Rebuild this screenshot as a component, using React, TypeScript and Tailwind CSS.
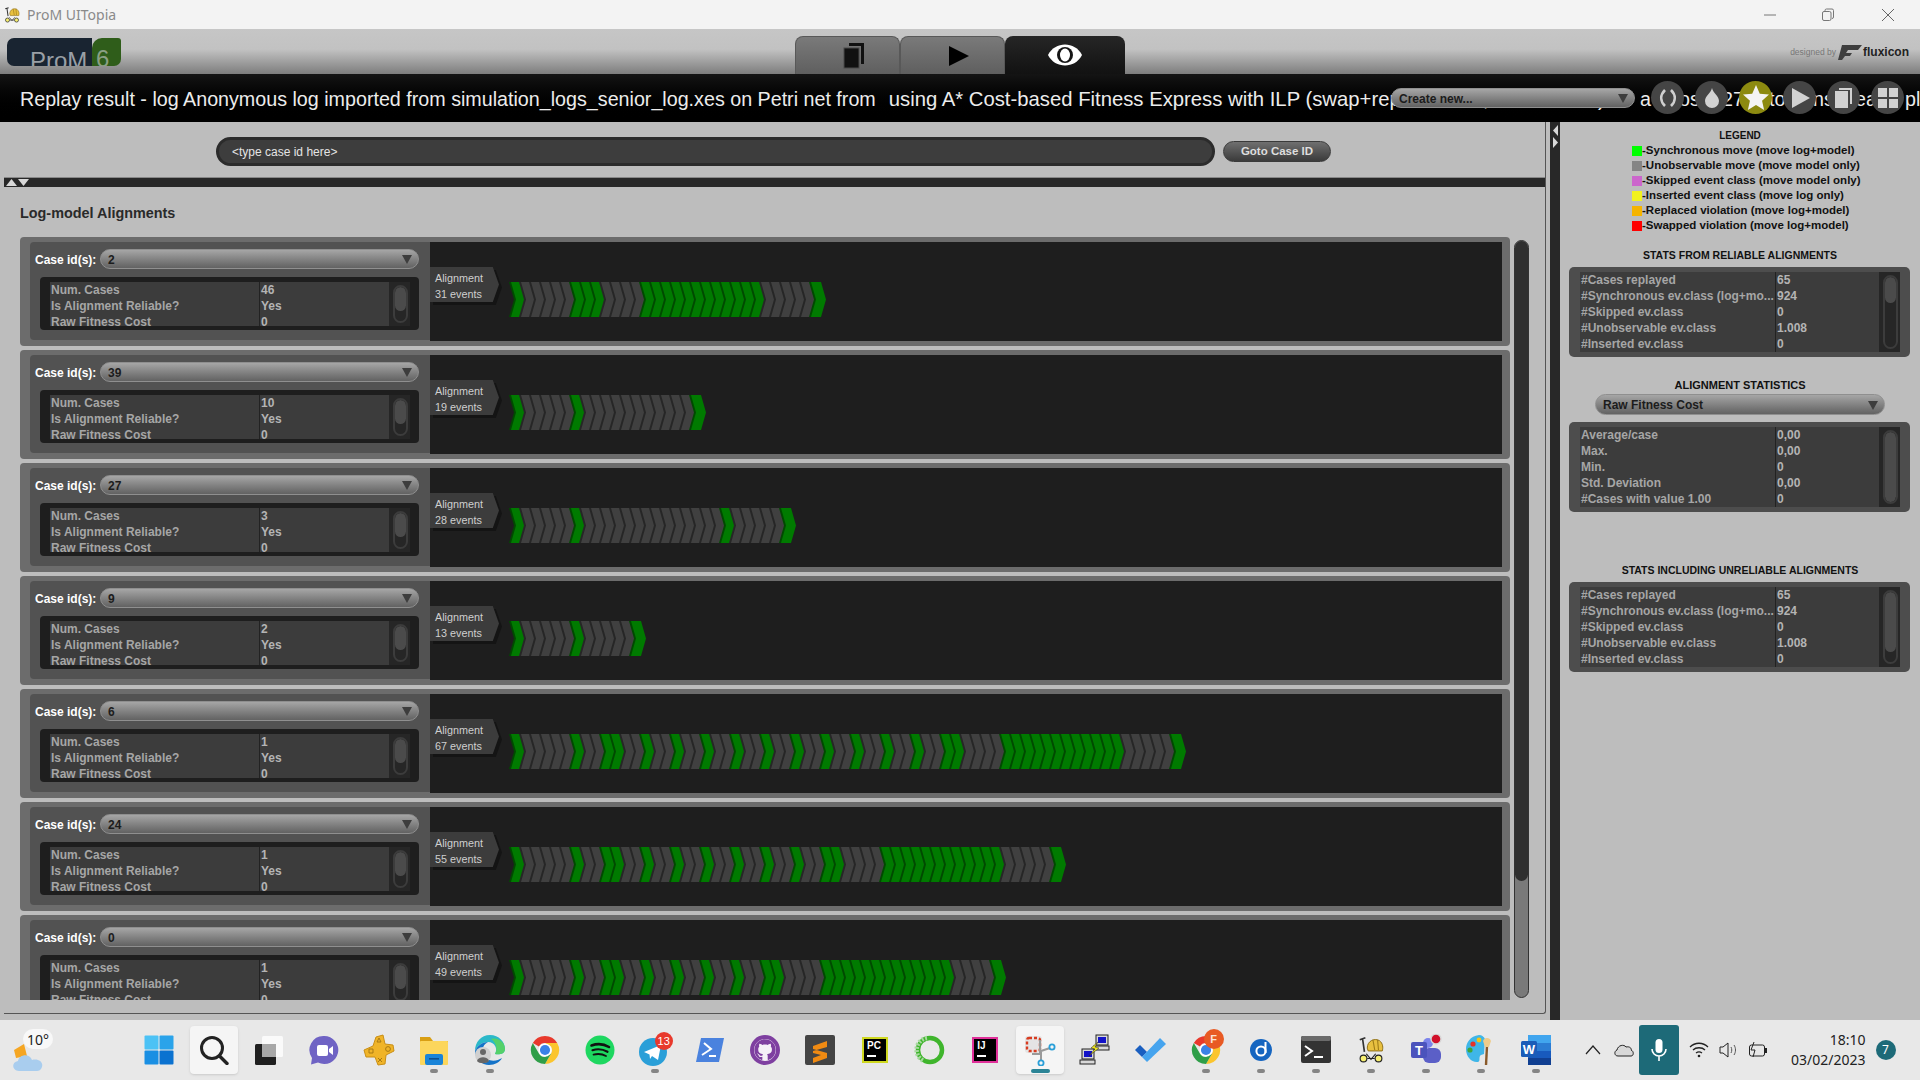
import { FaGithub } from 'react-icons/fa'

const sans = { fontFamily: '"Liberation Sans", Arial, sans-serif' }

const caseRows = [
  { id: '2', cases: '46', events: 31, green: [0, 6, 7, 8, 13, 14, 15, 16, 17, 18, 19, 20, 21, 22, 23, 24, 30] },
  { id: '39', cases: '10', events: 19, green: [0, 6, 18] },
  { id: '27', cases: '3', events: 28, green: [0, 6, 21, 27] },
  { id: '9', cases: '2', events: 13, green: [0, 6, 12] },
  {
    id: '6',
    cases: '1',
    events: 67,
    green: [0, 6, 9, 10, 13, 16, 19, 22, 25, 28, 31, 34, 37, 40, 43, 44, 49, 50, 51, 52, 53, 54, 55, 56, 57, 58, 59, 60, 66],
  },
  {
    id: '24',
    cases: '1',
    events: 55,
    green: [0, 6, 9, 10, 13, 16, 19, 22, 25, 28, 31, 32, 37, 38, 39, 40, 41, 42, 43, 44, 45, 46, 47, 48, 54],
  },
  {
    id: '0',
    cases: '1',
    events: 49,
    green: [0, 6, 9, 10, 13, 16, 19, 22, 25, 26, 31, 32, 33, 34, 35, 36, 37, 38, 39, 40, 41, 42, 43, 48],
  },
]

const legend = [
  { color: 'bg-[#00ff00]', label: '-Synchronous move (move log+model)' },
  { color: 'bg-[#858585]', label: '-Unobservable move (move model only)' },
  { color: 'bg-[#cc66cc]', label: '-Skipped event class (move model only)' },
  { color: 'bg-[#f2f21f]', label: '-Inserted event class (move log only)' },
  { color: 'bg-[#f5b400]', label: '-Replaced violation (move log+model)' },
  { color: 'bg-[#ff0000]', label: '-Swapped violation (move log+model)' },
]

const replayStats = [
  ['#Cases replayed', '65'],
  ['#Synchronous ev.class (log+mo...', '924'],
  ['#Skipped ev.class', '0'],
  ['#Unobservable ev.class', '1.008'],
  ['#Inserted ev.class', '0'],
]

const costStats = [
  ['Average/case', '0,00'],
  ['Max.', '0,00'],
  ['Min.', '0'],
  ['Std. Deviation', '0,00'],
  ['#Cases with value 1.00', '0'],
]

const Chevrons = ({ events, green }: { events: number; green: number[] }) => (
  <svg width={events * 10 + 8} height={36} className="block">
    {Array.from({ length: events }).map((_, i) => {
      const x = i * 10 + 2
      const isGreen = green.includes(i)
      return (
        <g key={i}>
          <polygon
            points={`${x - 2},0 ${x + 8},0 ${x + 13},17.5 ${x + 8},35 ${x - 2},35 ${x + 3},17.5`}
            fill={isGreen ? '#004a00' : '#262626'}
          />
          <polygon
            points={`${x},0 ${x + 10},0 ${x + 15},17.5 ${x + 10},35 ${x},35 ${x + 5},17.5`}
            fill={isGreen ? '#007a00' : '#404040'}
          />
        </g>
      )
    })}
  </svg>
)

const Triangle = () => (
  <svg width="10" height="9" viewBox="0 0 10 9" className="shrink-0">
    <polygon points="0,0 10,0 5,9" fill="#3d3d3d" />
  </svg>
)

const Combo = ({ value, className }: { value: string; className: string }) => (
  <div
    className={`flex items-center justify-between rounded-full border border-[#8f8f8f] bg-gradient-to-b from-[#a6a6a6] to-[#626262] pl-[7px] pr-[6px] pt-[1px] text-[12px] font-bold text-[#1c1c1c] ${className}`}
  >
    <span>{value}</span>
    <Triangle />
  </div>
)

const ScrollTrack = ({ thumb, height }: { thumb: string; height: string }) => (
  <div className={`w-[15px] overflow-hidden rounded-full border-2 border-[#3c3c3c] bg-[#262626] ${height}`}>
    <div className={`rounded-full bg-[#4b4b4b] ${thumb}`} />
  </div>
)

const CaseRow = ({ row }: { row: (typeof caseRows)[number] }) => (
  <div className="mb-[4px] flex h-[109px] shrink-0 rounded-[4px] bg-[#6c6c6c] pb-[5px] pl-[10px] pr-[8px] pt-[5px]">
    <div className="h-[98px] w-[400px] shrink-0 rounded-l-[4px] bg-[#525252] pl-[5px] pt-[7px]">
      <div className="flex h-[20px] items-center">
        <span className="w-[65px] pt-[1px] text-[12px] font-bold text-white">Case id(s):</span>
        <Combo value={row.id} className="h-[20px] w-[319px]" />
      </div>
      <div className="ml-[5px] mt-[8px] h-[53px] w-[379px] rounded-[4px] bg-[#1e1e1e] pl-[10px] pt-[5px]">
        <div className="flex h-[44px] overflow-hidden text-[12px] font-bold leading-[16px]">
          <div className="w-[210px] border-r border-[#222222] bg-[#3c3c3c] pl-[1px] text-[#a6a6a6]">
            <div>Num. Cases</div>
            <div>Is Alignment Reliable?</div>
            <div>Raw Fitness Cost</div>
          </div>
          <div className="w-[129px] bg-[#3c3c3c] pl-[1px] text-[#b4b4b4]">
            <div>{row.cases}</div>
            <div>Yes</div>
            <div>0</div>
          </div>
          <div className="w-[21px] bg-[#262626] pl-[4px] pt-[3px]">
            <ScrollTrack thumb="h-[24px]" height="h-[38px]" />
          </div>
        </div>
      </div>
    </div>
    <div className="flex h-[99px] flex-1 items-start bg-[#1e1e1e]">
      <div className="relative mt-[25px] h-[38px] w-[69px] shrink-0">
        <div className="absolute left-[3px] top-[3px] h-[35px] w-[69px] bg-[#141414] [clip-path:polygon(0_0,91%_0,100%_50%,91%_100%,0_100%)]" />
        <div className="absolute left-0 top-0 h-[35px] w-[69px] bg-[#3c3c3c] pl-[5px] pt-[3px] text-[10.8px] leading-[16px] text-[#cfcfcf] [clip-path:polygon(0_0,91%_0,100%_50%,91%_100%,0_100%)]">
          <div>Alignment</div>
          <div>{row.events} events</div>
        </div>
      </div>
      <div className="ml-[10px] mt-[40px]">
        <Chevrons events={row.events} green={row.green} />
      </div>
    </div>
  </div>
)

const StatsBox = ({ rows, thumb, className }: { rows: string[][]; thumb: string; className: string }) => (
  <div className={`ml-[9px] h-[90px] w-[341px] rounded-[5px] bg-[#4d4d4d] pl-[11px] pt-[5px] ${className}`}>
    <div className="flex h-[80px] text-[12px] font-bold leading-[16px]">
      <div className="w-[196px] border-r border-[#222222] bg-[#3c3c3c] pl-[1px] text-[#a6a6a6]">
        {rows.map((r) => (
          <div key={r[0]} className="whitespace-nowrap">
            {r[0]}
          </div>
        ))}
      </div>
      <div className="w-[103px] bg-[#3c3c3c] pl-[1px] text-[#b4b4b4]">
        {rows.map((r, i) => (
          <div key={i}>{r[1]}</div>
        ))}
      </div>
      <div className="w-[21px] bg-[#262626] pl-[4px] pt-[3px]">
        <ScrollTrack thumb={thumb} height="h-[74px]" />
      </div>
    </div>
  </div>
)

const CircleButton = ({ children, className }: { children: React.ReactNode; className: string }) => (
  <div className={`flex h-[33px] w-[33px] shrink-0 items-center justify-center rounded-full ${className}`}>{children}</div>
)

const HardHat = ({ size }: { size: number }) => (
  <svg width={size} height={size} viewBox="0 0 32 32">
    <path d="M12 14 C12 6 20 3 25 6 C29 9 29 14 28 17 L13 17 Z" fill="#e8c040" stroke="#8a6a10" strokeWidth="1" />
    <path d="M18 5 L20 16 M23 5 L24 16" stroke="#a07d18" strokeWidth="1.2" />
    <path d="M7 4 L9 18 M4 5 L10 3" stroke="#333" strokeWidth="1.8" />
    <circle cx="8" cy="25" r="3.6" fill="#f7ef70" stroke="#222" strokeWidth="1.2" />
    <circle cx="24" cy="25" r="3.6" fill="#f7ef70" stroke="#222" strokeWidth="1.2" />
    <path d="M11 20 L16 26 L21 20 M12 25 L20 25" stroke="#222" strokeWidth="1.2" fill="none" />
  </svg>
)

const ChromeIcon = () => (
  <svg width="30" height="30" viewBox="0 0 32 32">
    <path d="M16 1 A15 15 0 0 1 29 8.5 L16 8.5 A7.5 7.5 0 0 0 9.5 12.2 L3 8.5 A15 15 0 0 1 16 1" fill="#e8392c" />
    <path d="M29 8.5 A15 15 0 0 1 16 31 L22.5 19.7 A7.5 7.5 0 0 0 22.5 12.2 L16 8.5 Z" fill="#fbc52e" />
    <path d="M3 8.5 L9.5 19.7 A7.5 7.5 0 0 0 16 23.5 L22.5 19.7 L16 31 A15 15 0 0 1 3 8.5" fill="#2f9e48" />
    <circle cx="16" cy="16" r="7" fill="#fff" />
    <circle cx="16" cy="16" r="5.4" fill="#3b82e6" />
  </svg>
)

const taskbarIcons: { key: string; dot?: boolean; active?: boolean; highlight?: boolean; icon: React.ReactNode }[] = [
  {
    key: 'windows',
    icon: (
      <svg width="30" height="30" viewBox="0 0 30 30">
        <rect x="0.5" y="0.5" width="14" height="14" rx="1" fill="#4cc2f5" />
        <rect x="15.5" y="0.5" width="14" height="14" rx="1" fill="#2aa3ea" />
        <rect x="0.5" y="15.5" width="14" height="14" rx="1" fill="#1a8fe3" />
        <rect x="15.5" y="15.5" width="14" height="14" rx="1" fill="#0b72d0" />
      </svg>
    ),
  },
  {
    key: 'search',
    highlight: true,
    icon: (
      <svg width="30" height="30" viewBox="0 0 30 30" fill="none">
        <circle cx="13" cy="13" r="10.5" stroke="#222" strokeWidth="3" />
        <path d="M20.5 21 L28 28.5" stroke="#222" strokeWidth="3.4" strokeLinecap="round" />
      </svg>
    ),
  },
  {
    key: 'taskview',
    icon: (
      <svg width="30" height="30" viewBox="0 0 30 30">
        <rect x="1" y="9" width="21" height="21" rx="1.5" fill="#1f1f1f" />
        <rect x="8" y="1" width="21" height="21" rx="1.5" fill="#fafafa" />
        <rect x="8" y="9" width="14" height="13" fill="#a8a8a8" />
      </svg>
    ),
  },
  {
    key: 'meet',
    icon: (
      <svg width="30" height="30" viewBox="0 0 30 30">
        <path d="M15 1 A14 14 0 1 1 9 27.5 L2 29.5 L3 23 A14 14 0 0 1 15 1" fill="#6f63c4" />
        <rect x="8" y="10" width="11" height="11" rx="2" fill="#fff" />
        <path d="M20 14 L24 11 L24 20 L20 17 Z" fill="#fff" />
      </svg>
    ),
  },
  {
    key: 'psplus',
    icon: (
      <svg width="32" height="32" viewBox="0 0 32 32">
        <path
          d="M13 3 L20 1 L22 10 L30 11 L31 17 L23 21 L22 30 L15 31 L12 23 L3 23 L1 16 L10 12 Z"
          fill="#f0b428"
          stroke="#c98f16"
          strokeWidth="1"
        />
        <path d="M16 4 L18 8 L14 8 Z M6 15 L10 15 L10 19 L6 19 Z" fill="none" stroke="#a87a14" strokeWidth="1" />
        <circle cx="25" cy="15" r="2.4" fill="none" stroke="#a87a14" />
        <path d="M15 24 L19 28 M19 24 L15 28" stroke="#a87a14" />
      </svg>
    ),
  },
  {
    key: 'explorer',
    dot: true,
    icon: (
      <svg width="32" height="32" viewBox="0 0 32 32">
        <path d="M2 3 H12 L15 7 H30 V12 H2 Z" fill="#d99f14" />
        <rect x="2" y="7" width="28" height="24" rx="1" fill="#fcd65c" />
        <rect x="7" y="20" width="18" height="11" rx="2" fill="#1a84d8" />
        <rect x="11" y="24" width="10" height="1.6" fill="#0c4f8f" />
      </svg>
    ),
  },
  {
    key: 'edge',
    dot: true,
    icon: (
      <svg width="32" height="32" viewBox="0 0 32 32">
        <path d="M16 1 C25 1 31 8 31 15 C31 20 25 21 21 20 C24 15 21 8 14 8 C8 8 3 12 1 17 C1 8 7 1 16 1" fill="#2bb8c9" />
        <path d="M17 5 C25 3 31 9 31 15 C31 20 25 21 21 20 C24 15 22 8 17 5" fill="#55d16a" />
        <path d="M1 17 C1 25 8 31 15 31 C21 31 26 28 28 24 C22 28 12 28 9 20 C7 15 10 10 14 8 C8 8 3 12 1 17" fill="#1473c8" />
        <circle cx="9" cy="21" r="8" fill="#d0d0d0" />
        <circle cx="9" cy="18" r="3" fill="#666" />
        <path d="M3 27 C4 22 14 22 15 27 C13 30 5 30 3 27" fill="#666" />
      </svg>
    ),
  },
  { key: 'chrome', icon: <ChromeIcon /> },
  {
    key: 'spotify',
    icon: (
      <svg width="30" height="30" viewBox="0 0 30 30" fill="none">
        <circle cx="15" cy="15" r="14.5" fill="#1ed760" />
        <path d="M6.5 10.5 C12 8.5 19 9 24 12" stroke="#111" strokeWidth="2.6" strokeLinecap="round" />
        <path d="M7.5 15.2 C12 13.8 18 14.2 22.5 16.8" stroke="#111" strokeWidth="2.2" strokeLinecap="round" />
        <path d="M8.5 19.6 C12.5 18.6 17.5 19 21 21" stroke="#111" strokeWidth="1.8" strokeLinecap="round" />
      </svg>
    ),
  },
  {
    key: 'telegram',
    dot: true,
    icon: (
      <div className="relative h-[32px] w-[32px]">
        <svg width="28" height="28" viewBox="0 0 28 28" className="absolute left-[0px] top-[4px]">
          <circle cx="14" cy="14" r="14" fill="#2a9fd8" />
          <path d="M5 14 L22 7 L19 22 L13 18 L11 21 L10.5 16.5 Z" fill="#fff" />
        </svg>
        <div
          className="absolute left-[16px] top-[-2px] flex h-[18px] w-[18px] items-center justify-center rounded-full bg-[#e8392c] text-[11px] text-white"
          style={sans}
        >
          13
        </div>
      </div>
    ),
  },
  {
    key: 'powershell',
    icon: (
      <svg width="30" height="30" viewBox="0 0 30 30" fill="none">
        <path d="M6 3 H29 L24 27 H1 Z" fill="#4a82de" />
        <path d="M9 8 L16 14 L7 20" stroke="#fff" strokeWidth="2" />
        <path d="M14 21 H21" stroke="#fff" strokeWidth="2" />
      </svg>
    ),
  },
  {
    key: 'github',
    icon: (
      <div className="flex h-[30px] w-[30px] items-center justify-center rounded-full border-[4px] border-[#7e3fa0] bg-[#f5f0f7]">
        <FaGithub size={22} color="#7e3fa0" />
      </div>
    ),
  },
  {
    key: 'sublime',
    icon: (
      <svg width="30" height="30" viewBox="0 0 30 30">
        <rect width="30" height="30" rx="2" fill="#444" />
        <path d="M22 6 L8 11 L8 16 L22 12 Z M8 14 L22 18 L22 23 L8 28 L8 23 L16 20 L8 18 Z" fill="#f08a12" />
      </svg>
    ),
  },
  {
    key: 'pycharm',
    icon: (
      <div className="flex h-[26px] w-[26px] flex-col border-2 border-[#cfd820] bg-black pl-[3px] pt-[1px] text-[10px] font-bold leading-[11px] text-white" style={sans}>
        <span>PC</span>
        <span className="mt-[4px] h-[2px] w-[9px] bg-white" />
      </div>
    ),
  },
  {
    key: 'ring',
    icon: (
      <svg width="32" height="32" viewBox="0 0 32 32" fill="none">
        <circle cx="16" cy="16" r="12" stroke="#3fb52c" strokeWidth="4.5" />
        <path d="M13 4 A12 12 0 0 0 10 27" stroke="#a8d8a0" strokeWidth="4.5" strokeDasharray="2 1.5" />
      </svg>
    ),
  },
  {
    key: 'intellij',
    icon: (
      <div className="flex h-[26px] w-[26px] flex-col border-2 border-[#e0319a] bg-black pl-[3px] pt-[1px] text-[10px] font-bold leading-[11px] text-white" style={sans}>
        <span>IJ</span>
        <span className="mt-[4px] h-[2px] w-[9px] bg-white" />
      </div>
    ),
  },
  {
    key: 'snip',
    highlight: true,
    active: true,
    icon: (
      <svg width="32" height="32" viewBox="0 0 32 32" fill="none">
        <rect x="1" y="2" width="17" height="17" rx="3" fill="#e4e4e4" />
        <rect x="3" y="4" width="13" height="13" rx="2" stroke="#d83b20" strokeWidth="2.4" strokeDasharray="3 2" />
        <path d="M16 6 V20 M16 20 H8 M17 17 L26 14 M17 17 L17 26" stroke="#9a9a9a" strokeWidth="2" />
        <circle cx="28" cy="13" r="2.6" stroke="#2a9fd8" strokeWidth="1.8" />
        <circle cx="17" cy="29" r="2.6" stroke="#2a9fd8" strokeWidth="1.8" />
      </svg>
    ),
  },
  {
    key: 'putty',
    icon: (
      <svg width="32" height="32" viewBox="0 0 32 32">
        <rect x="17" y="1" width="12" height="10" fill="#d8d8d8" stroke="#222" />
        <rect x="19" y="3" width="8" height="6" fill="#1212c8" />
        <rect x="15" y="12" width="15" height="4" fill="#d8d8d8" stroke="#222" />
        <rect x="3" y="15" width="12" height="10" fill="#d8d8d8" stroke="#222" />
        <rect x="5" y="17" width="8" height="6" fill="#1212c8" />
        <rect x="1" y="26" width="15" height="4" fill="#d8d8d8" stroke="#222" />
        <path d="M19 8 L12 14 L16 15 L10 22 L20 14 L16 13 Z" fill="#f2e81c" stroke="#222" strokeWidth="0.5" />
      </svg>
    ),
  },
  {
    key: 'todo',
    icon: (
      <svg width="32" height="32" viewBox="0 0 32 32">
        <path d="M1 16 L6 11 L13 18 L8 23 Z" fill="#1a5fc0" />
        <path d="M8 23 L26 4 L32 10 L13 28 Z" fill="#46a4ee" />
      </svg>
    ),
  },
  {
    key: 'chrome2',
    dot: true,
    icon: (
      <div className="relative h-[30px] w-[30px]">
        <ChromeIcon />
        <div
          className="absolute left-[13px] top-[-6px] flex h-[20px] w-[20px] items-center justify-center rounded-full bg-[#e85a24] text-[11px] font-bold text-[#fbe3d8]"
          style={sans}
        >
          F
        </div>
      </div>
    ),
  },
  {
    key: 'dash',
    dot: true,
    icon: (
      <svg width="24" height="30" viewBox="0 0 24 30" fill="none">
        <circle cx="12" cy="15" r="11" fill="#1565c0" />
        <circle cx="12" cy="16" r="4.6" stroke="#fff" strokeWidth="2" />
        <path d="M16.5 7 V18" stroke="#fff" strokeWidth="2" />
      </svg>
    ),
  },
  {
    key: 'terminal',
    dot: true,
    icon: (
      <svg width="30" height="28" viewBox="0 0 30 28" fill="none">
        <rect width="30" height="27" rx="2" fill="#333" />
        <rect width="30" height="5" rx="2" fill="#6b6b6b" />
        <path d="M4 10 L11 15 L4 20" stroke="#fff" strokeWidth="2" />
        <path d="M13 21 H22" stroke="#fff" strokeWidth="2" />
      </svg>
    ),
  },
  { key: 'prom', dot: true, icon: <HardHat size={30} /> },
  {
    key: 'teams',
    dot: true,
    icon: (
      <svg width="36" height="32" viewBox="0 0 36 32">
        <circle cx="20" cy="9" r="5" fill="#7b83eb" />
        <rect x="15" y="14" width="18" height="15" rx="6" fill="#5b5fc7" />
        <rect x="3" y="8" width="16" height="16" rx="2" fill="#4b53bc" />
        <text x="11" y="21" textAnchor="middle" fontSize="13" fontWeight="700" fill="#fff" fontFamily="Liberation Sans">
          T
        </text>
        <circle cx="28" cy="5" r="5" fill="#d1102a" stroke="#d8d8d8" strokeWidth="1.4" />
      </svg>
    ),
  },
  {
    key: 'paint',
    dot: true,
    icon: (
      <svg width="32" height="32" viewBox="0 0 32 32" fill="none">
        <path d="M14 1 C5 2 1 9 1 15 C1 23 7 29 13 28 C16 27 13 23 16 21 L19 20 L20 5 C19 3 17 1 14 1" fill="#3fb6e8" />
        <circle cx="8" cy="10" r="2.6" fill="#e2332b" />
        <circle cx="14" cy="6" r="2.4" fill="#f5c518" />
        <circle cx="5" cy="16" r="2.6" fill="#3ea53a" />
        <path d="M22 12 L21 31" stroke="#8a5a2a" strokeWidth="2.4" />
        <path d="M18 7 C19 3 25 3 26 7 L24 13 L20 13 Z" fill="#eecb8a" />
      </svg>
    ),
  },
  {
    key: 'word',
    dot: true,
    icon: (
      <svg width="30" height="32" viewBox="0 0 30 32">
        <rect x="7" y="1" width="23" height="8" fill="#41a5ee" />
        <rect x="7" y="9" width="23" height="8" fill="#2b7cd3" />
        <rect x="7" y="17" width="23" height="7" fill="#185abd" />
        <rect x="7" y="24" width="23" height="7" fill="#103f91" />
        <rect x="0" y="7" width="16" height="16" rx="1.5" fill="#1a5cb8" />
        <text x="8" y="20" textAnchor="middle" fontSize="13" fontWeight="700" fill="#fff" fontFamily="Liberation Sans">
          W
        </text>
      </svg>
    ),
  },
]

const App = () => {
  return (
    <div className="flex h-[1080px] w-[1920px] flex-col overflow-hidden bg-[#bdbdbd]" style={sans}>
      {/* window title */}
      <div className="flex h-[29px] shrink-0 items-center bg-[#f3f3f3] pl-[3px]">
        <HardHat size={18} />
        <span className="ml-[6px] text-[14px] text-[#8a8a8a]" style={{ fontFamily: '"Noto Sans", sans-serif' }}>
          ProM UITopia
        </span>
        <div className="ml-auto flex items-center text-[#777777]">
          <svg width="14" height="14" viewBox="0 0 14 14" className="mr-[44px]">
            <path d="M1 7 H13" stroke="#777" strokeWidth="1" />
          </svg>
          <svg width="14" height="14" viewBox="0 0 14 14" fill="none" className="mr-[46px]">
            <rect x="1.5" y="3.5" width="8.5" height="9" rx="1.5" stroke="#777" />
            <path d="M4 3 V2.5 A1.5 1.5 0 0 1 5.5 1 H11 A1.5 1.5 0 0 1 12.5 2.5 V9 A1.5 1.5 0 0 1 11 10.5" stroke="#777" />
          </svg>
          <svg width="14" height="14" viewBox="0 0 14 14" className="mr-[25px]">
            <path d="M1 1 L13 13 M13 1 L1 13" stroke="#666" strokeWidth="1" />
          </svg>
        </div>
      </div>

      {/* toolbar */}
      <div className="flex h-[45px] shrink-0 items-end bg-[linear-gradient(#c6c6c6_0%,#c2c2c2_45%,#7d7d7d_100%)]">
        <div className="mb-[8px] ml-[7px] flex h-[28px] w-[114px] overflow-hidden rounded-b-[7px] rounded-tl-[7px]">
          <div className="h-full w-[85px] bg-[#192431] pl-[23px] pt-[9px] text-[24px] leading-[28px] text-[#9aa0a6]">ProM</div>
          <div className="h-full w-[29px] rounded-tl-[10px] rounded-tr-[3px] bg-[#2f5d1a] pl-[4px] pt-[7px] text-[24px] leading-[28px] text-[#8ba084]">
            6
          </div>
        </div>
        <div className="ml-[674px] flex h-[38px]">
          <div className="flex h-full w-[105px] items-center justify-center rounded-t-[8px] border border-b-0 border-[#585858] bg-gradient-to-b from-[#7a7a7a] to-[#5f5f5f] pl-[13px]">
            <svg width="22" height="26" viewBox="0 0 22 26">
              <path d="M6 0 H21 V21 H18 V3 H6 Z" fill="#111" />
              <rect x="1" y="5" width="15" height="20" fill="#111" stroke="#4a4a4a" />
            </svg>
          </div>
          <div className="flex h-full w-[105px] items-center justify-center rounded-t-[8px] border border-b-0 border-[#585858] bg-gradient-to-b from-[#7a7a7a] to-[#5f5f5f] pl-[13px]">
            <svg width="22" height="22" viewBox="0 0 22 22">
              <polygon points="1,1 21,11 1,21" fill="#000" />
            </svg>
          </div>
          <div className="flex h-full w-[120px] items-center justify-center rounded-t-[8px] bg-gradient-to-b from-[#262626] to-[#121212]">
            <svg width="36" height="22" viewBox="0 0 36 22">
              <path d="M1 11 C8 -3 28 -3 35 11 C28 25 8 25 1 11 Z" fill="#fff" />
              <circle cx="18" cy="11" r="8" fill="#161616" />
              <ellipse cx="18" cy="11" rx="5" ry="6.5" fill="#fff" />
            </svg>
          </div>
        </div>
        <div className="mb-[13px] ml-auto mr-[11px] flex items-center">
          <span className="mr-[2px] text-[8.5px] text-[#777777]">designed by</span>
          <svg width="24" height="16" viewBox="0 0 24 16">
            <path d="M4 1 H24 L20 6 H10 L8 9 H14 L12 12 H7 L4 16 H0 Z" fill="#3f3f3f" />
          </svg>
          <span className="ml-[1px] text-[12px] font-bold text-[#222222]">fluxicon</span>
        </div>
      </div>

      {/* view title */}
      <div className="relative h-[48px] shrink-0 overflow-hidden bg-gradient-to-b from-[#141414] to-black">
        <div className="whitespace-pre pl-[20px] pt-[13px] text-[19.7px] leading-[24px] text-[#ececec]">
          Replay result - log Anonymous log imported from simulation_logs_senior_log.xes on Petri net from
          <span className="ml-[13px] text-[20.3px]">using A* Cost-based Fitness Express with ILP (swap+replacement, max events)</span>
          <span className="absolute left-[1640px] top-[13px]">a</span>
          <span className="absolute left-[1679px] top-[13px]">os</span>
          <span className="absolute left-[1722px] top-[13px]">27</span>
          <span className="absolute left-[1769px] top-[13px]">to</span>
          <span className="absolute left-[1813px] top-[13px]">ns</span>
          <span className="absolute left-[1855px] top-[13px]">ea</span>
          <span className="absolute left-[1905px] top-[13px]">pl</span>
        </div>
        <div className="absolute inset-y-0 left-[1391px] right-0 flex items-start">
          <Combo value="Create new..." className="mt-[14px] h-[20px] w-[244px] shrink-0" />
          <div className="ml-[16px] mt-[7px] flex gap-[11px]">
            <CircleButton className="bg-[#454545]">
              <svg width="20" height="20" viewBox="0 0 20 20" fill="none">
                <path d="M7 2 C2 7 2 13 7 18" stroke="#cfcfcf" strokeWidth="2.6" />
                <path d="M13 2 C18 7 18 13 13 18" stroke="#cfcfcf" strokeWidth="2.6" />
              </svg>
            </CircleButton>
            <CircleButton className="bg-[#454545]">
              <svg width="16" height="20" viewBox="0 0 16 20">
                <path d="M8 0 C9 5 15 8 15 13 A7 7 0 0 1 1 13 C1 8 7 5 8 0" fill="#d2d2d2" />
              </svg>
            </CircleButton>
            <CircleButton className="bg-[#8c8a10]">
              <svg width="26" height="25" viewBox="0 0 24 23">
                <polygon points="12,0 15.5,8 24,8.8 17.6,14.4 19.5,23 12,18.5 4.5,23 6.4,14.4 0,8.8 8.5,8" fill="#f4f4f4" />
              </svg>
            </CircleButton>
            <CircleButton className="bg-[#454545]">
              <svg width="18" height="20" viewBox="0 0 18 20" className="ml-[3px]">
                <polygon points="0,0 18,10 0,20" fill="#d2d2d2" />
              </svg>
            </CircleButton>
            <CircleButton className="bg-[#454545]">
              <svg width="17" height="20" viewBox="0 0 17 20">
                <path d="M4 0 H17 V16 H15 V2 H4 Z" fill="#d2d2d2" />
                <rect x="0" y="3" width="13" height="17" fill="#d2d2d2" />
              </svg>
            </CircleButton>
            <CircleButton className="bg-[#454545]">
              <svg width="20" height="20" viewBox="0 0 20 20" fill="#d2d2d2">
                <rect width="9" height="9" />
                <rect x="11" width="9" height="9" />
                <rect y="11" width="9" height="9" />
                <rect x="11" y="11" width="9" height="9" />
              </svg>
            </CircleButton>
          </div>
        </div>
      </div>

      {/* main area */}
      <div className="flex h-[898px] shrink-0">
        <div className="ml-[4px] h-[892px] w-[1542px] rounded-br-[3px] border-b border-r border-[#555555] pt-[15px]">
          <div className="flex items-center">
            <div className="ml-[212px] flex h-[29px] w-[999px] items-center rounded-full border-[3px] border-[#2b2b2b] bg-[#3d3d3d] pl-[13px] pt-[1px] text-[12px] text-[#e4e4e4]">
              {'<type case id here>'}
            </div>
            <div className="ml-[8px] flex h-[21px] w-[108px] items-center justify-center rounded-full border border-[#3a3a3a] bg-gradient-to-b from-[#707070] to-[#3b3b3b] pt-[1px] text-[11.5px] font-bold text-[#dedede]">
              Goto Case ID
            </div>
          </div>
          <div className="mt-[11px] flex h-[10px] items-center gap-[1px] border-t border-[#888888] bg-[#282828] pl-[2px]">
            <svg width="11" height="7" viewBox="0 0 11 7">
              <polygon points="0,7 11,7 5.5,0" fill="#d8d8d8" />
            </svg>
            <svg width="11" height="7" viewBox="0 0 11 7">
              <polygon points="0,0 11,0 5.5,7" fill="#d8d8d8" />
            </svg>
          </div>
          <div className="ml-[16px] mt-[18px] h-[16px] text-[14.4px] font-bold leading-[16px] text-[#2a2a2a]">Log-model Alignments</div>
          <div className="mt-[16px] flex h-[763px]">
            <div className="ml-[16px] flex h-[763px] w-[1490px] flex-col overflow-hidden">
              {caseRows.map((row) => (
                <CaseRow key={row.id} row={row} />
              ))}
            </div>
            <div className="ml-[4px] mt-[3px] h-[758px] w-[15px] rounded-full border border-[#333333] bg-[#7a7a7a]">
              <div className="h-[640px] rounded-full bg-[#2f2f2f]" />
            </div>
          </div>
        </div>

        <div className="ml-[4px] flex w-[10px] flex-col bg-[#282828] pl-[3px] pt-[3px]">
          <svg width="5" height="11" viewBox="0 0 5 11">
            <polygon points="5,0 5,11 0,5.5" fill="#d8d8d8" />
          </svg>
          <svg width="5" height="11" viewBox="0 0 5 11" className="mt-[1px]">
            <polygon points="0,0 0,11 5,5.5" fill="#d8d8d8" />
          </svg>
        </div>

        <div className="w-[360px] rounded-t-[4px] pt-[7px] text-[11.5px] font-bold text-[#111111]">
          <div className="h-[14px] text-center text-[10px] leading-[14px]">LEGEND</div>
          <div className="pl-[72px]">
            {legend.map((item) => (
              <div key={item.label} className="flex h-[15px] items-center">
                <span className={`h-[10px] w-[10px] shrink-0 ${item.color}`} />
                <span className="whitespace-nowrap leading-[15px]">{item.label}</span>
              </div>
            ))}
          </div>
          <div className="mt-[15px] h-[15px] text-center text-[10.5px] leading-[15px]">STATS FROM RELIABLE ALIGNMENTS</div>
          <StatsBox rows={replayStats} thumb="h-[26px]" className="mt-[4px]" />
          <div className="mt-[21px] h-[15px] text-center text-[11px] leading-[15px]">ALIGNMENT STATISTICS</div>
          <Combo value="Raw Fitness Cost" className="ml-[35px] mt-[1px] h-[21px] w-[290px]" />
          <StatsBox rows={costStats} thumb="h-[70px]" className="mt-[7px]" />
          <div className="mt-[51px] h-[15px] text-center text-[10.5px] leading-[15px]">STATS INCLUDING UNRELIABLE ALIGNMENTS</div>
          <StatsBox rows={replayStats} thumb="h-[60px]" className="mt-[4px]" />
        </div>
      </div>

      {/* taskbar */}
      <div className="flex h-[60px] shrink-0 items-center bg-[#e8e8e8]">
        <div className="relative h-[60px] w-[131.5px] shrink-0">
          <svg width="32" height="34" viewBox="0 0 32 34" className="absolute left-[12px] top-[20px]">
            <path d="M2 10 L12 4 L15 16 L4 18 Z" fill="#f5a623" />
            <path d="M7 31 C0 31 -1 22 6 21 C7 14 18 13 20 20 C27 18 33 23 29 29 C28 30 27 31 25 31 Z" fill="#a9cdee" />
          </svg>
          <div className="absolute left-[23px] top-[9px] flex h-[20px] w-[30px] items-center justify-center rounded-full bg-[#f8f8f8] text-[14px] text-[#222222]" style={{ fontFamily: '"Noto Sans", sans-serif' }}>
            10°
          </div>
        </div>
        {taskbarIcons.map((item) => (
          <div key={item.key} className="relative flex h-[60px] w-[55.08px] shrink-0 items-center justify-center">
            {item.highlight && <div className="absolute left-[3px] top-[6px] h-[48px] w-[48px] rounded-[4px] bg-[#f5f5f5] shadow-sm" />}
            <div className="relative">{item.icon}</div>
            {item.dot && <div className="absolute bottom-[7px] h-[4px] w-[8px] rounded-full bg-[#858585]" />}
            {item.active && <div className="absolute bottom-[7px] h-[4px] w-[19px] rounded-full bg-[#2b8496]" />}
          </div>
        ))}
        <svg width="16" height="10" viewBox="0 0 16 10" fill="none" className="ml-[21px] shrink-0">
          <path d="M1 9 L8 1 L15 9" stroke="#222" strokeWidth="1.2" />
        </svg>
        <svg width="20" height="14" viewBox="0 0 20 14" className="ml-[13px] shrink-0">
          <path d="M4 13 C0 13 0 8 3 7 C4 2 10 1 12 4 C16 3 18 6 17 7 C20 8 20 13 17 13 Z" fill="#d8d8d8" stroke="#222" />
        </svg>
        <div className="ml-[5px] flex h-[50px] w-[40px] shrink-0 items-center justify-center rounded-[3px] bg-[#1d6a78]">
          <svg width="16" height="24" viewBox="0 0 16 24" fill="none">
            <rect x="4.5" y="1" width="7" height="14" rx="3.5" fill="#fff" />
            <path d="M1 11 A7 7 0 0 0 15 11 M8 18 V23" stroke="#fff" strokeWidth="1.6" />
          </svg>
        </div>
        <svg width="20" height="16" viewBox="0 0 20 16" fill="none" className="ml-[10px] shrink-0">
          <path d="M1 5 C6 0 14 0 19 5 M4 8 C7 5 13 5 16 8 M7 11 C9 9.5 11 9.5 13 11" stroke="#222" strokeWidth="1.3" />
          <circle cx="10" cy="14" r="1.3" fill="#222" />
        </svg>
        <svg width="18" height="16" viewBox="0 0 18 16" fill="none" className="ml-[10px] shrink-0">
          <path d="M1 5 H4 L9 1 V15 L4 11 H1 Z" stroke="#222" />
          <path d="M12 5 C13 7 13 9 12 11 M15 3 C17 6 17 10 15 13" stroke="#555" />
        </svg>
        <svg width="20" height="16" viewBox="0 0 20 16" fill="none" className="ml-[11px] shrink-0">
          <rect x="1.5" y="3" width="15" height="11" rx="2" stroke="#222" />
          <rect x="17" y="6" width="2" height="5" fill="#222" />
          <path d="M6 0 L3 8 H7 L5 15" stroke="#222" />
        </svg>
        <div className="ml-[8px] w-[90px] shrink-0 text-right text-[14px] leading-[20px] text-[#222222]" style={{ fontFamily: '"Noto Sans", sans-serif' }}>
          <div>18:10</div>
          <div>03/02/2023</div>
        </div>
        <div className="ml-[10px] flex h-[20px] w-[20px] shrink-0 items-center justify-center rounded-full bg-[#1d6a78] text-[12px] text-white" style={{ fontFamily: '"Noto Sans", sans-serif' }}>
          7
        </div>
      </div>
    </div>
  )
}

export default App
